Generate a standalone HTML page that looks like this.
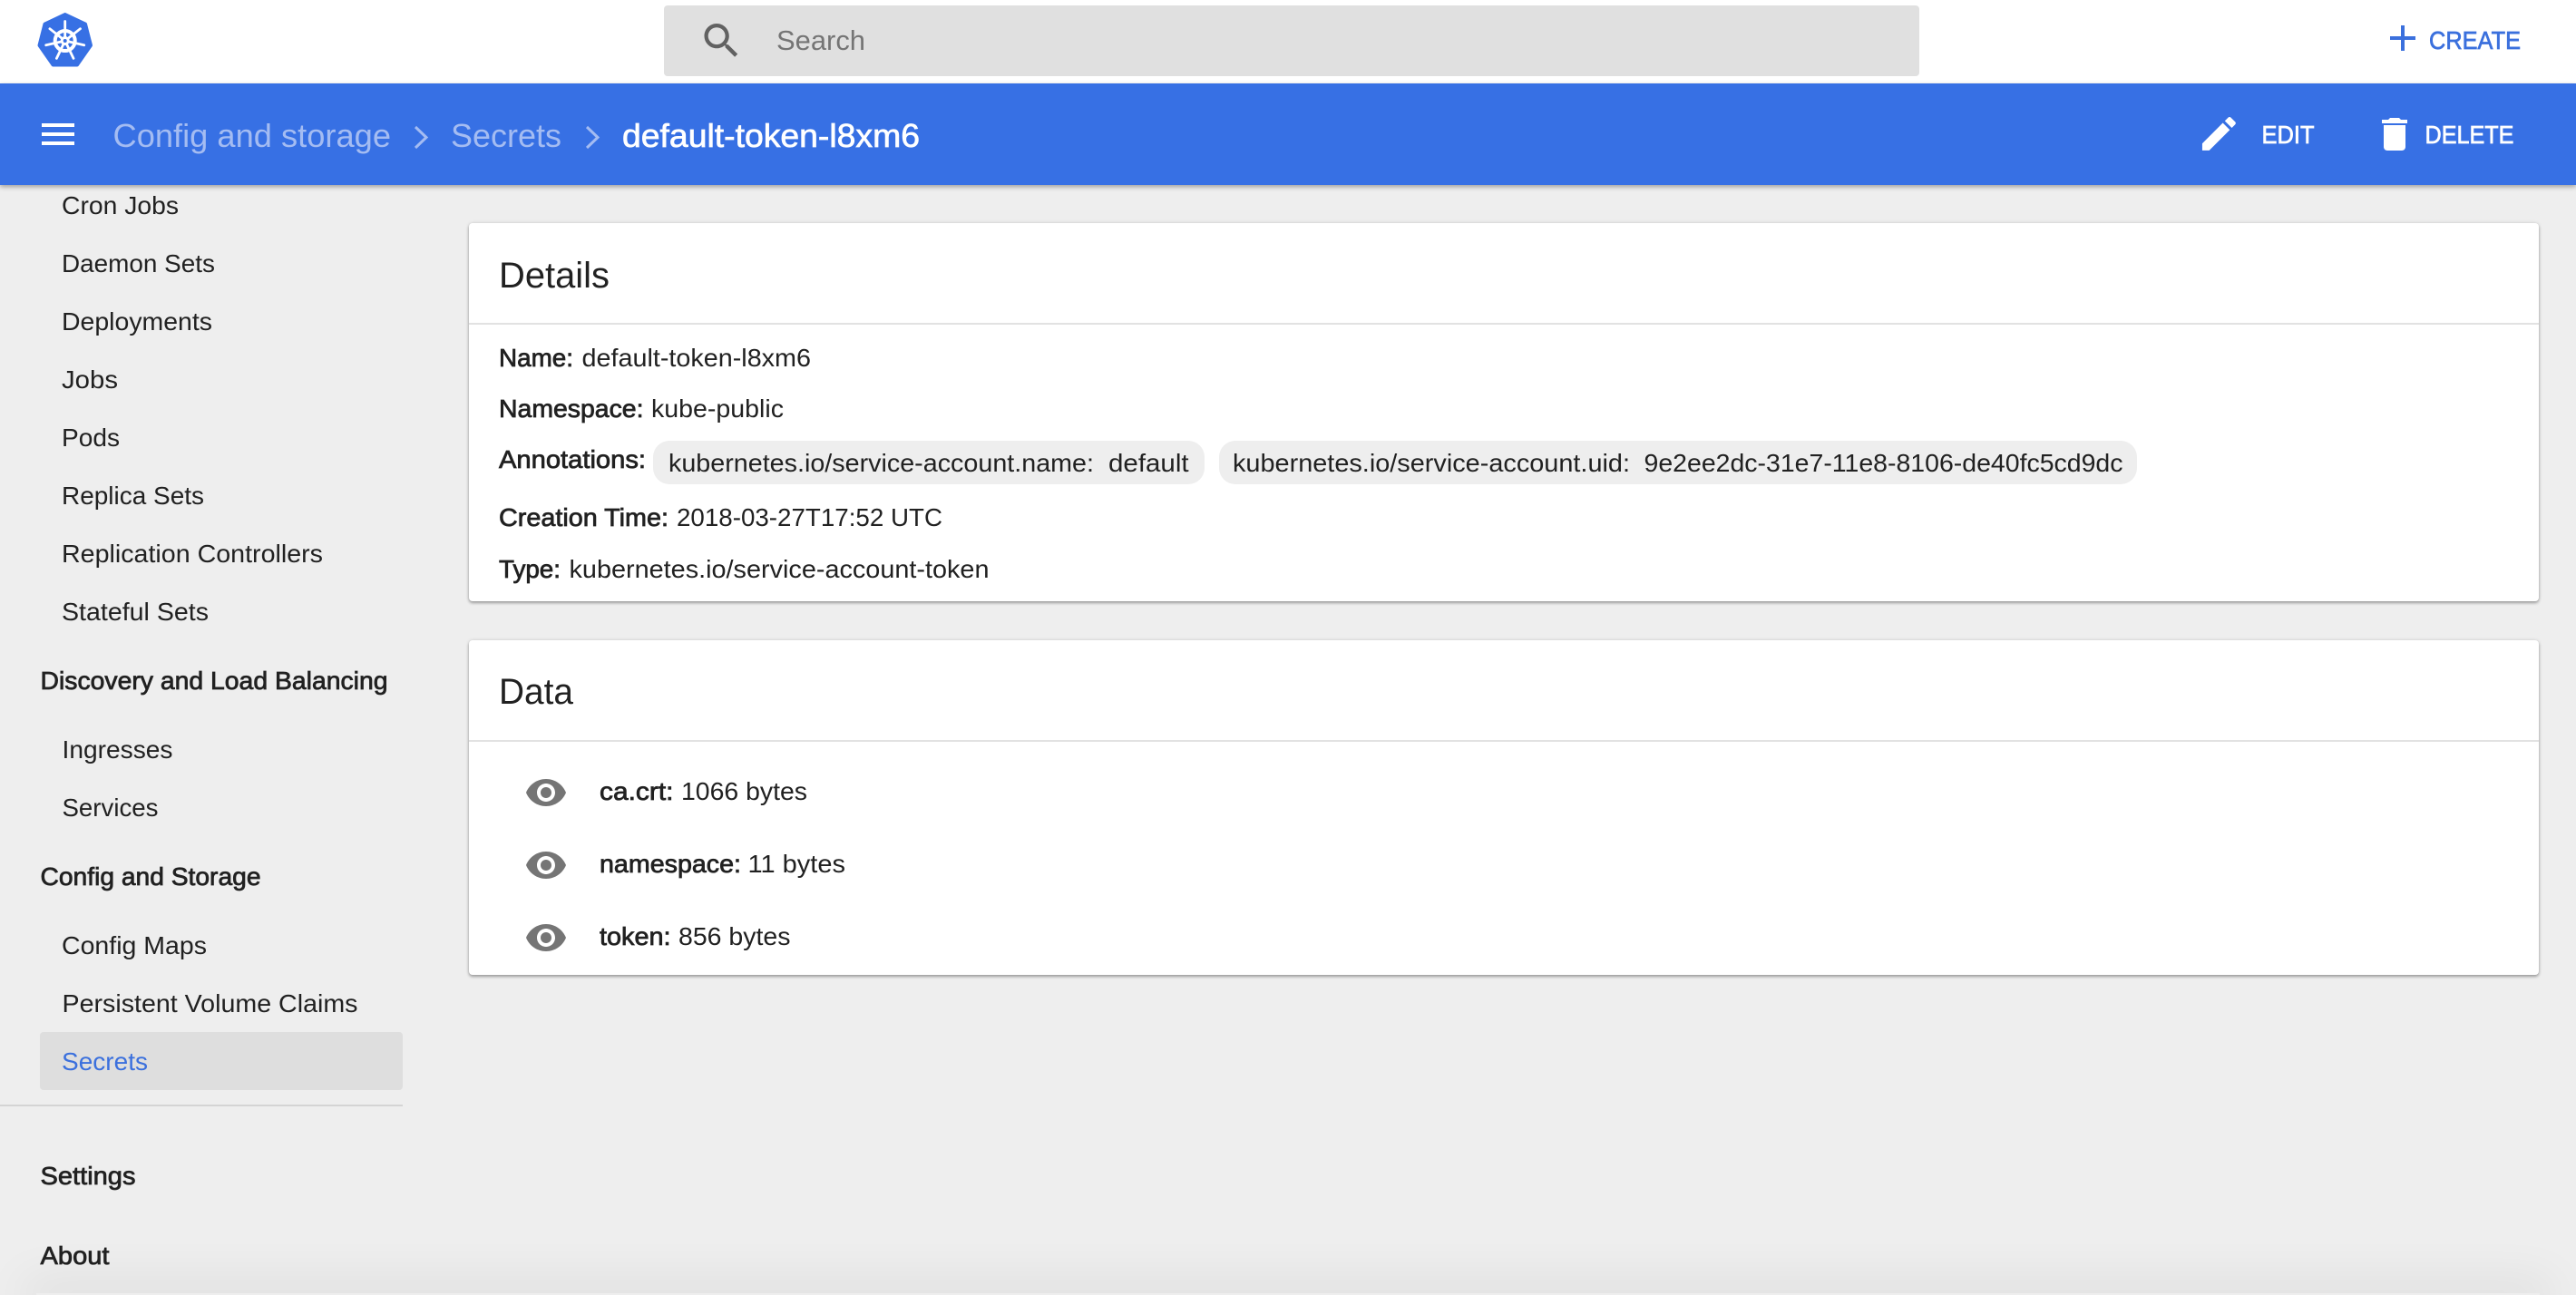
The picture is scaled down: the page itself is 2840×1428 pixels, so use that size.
<!DOCTYPE html>
<html>
<head>
<meta charset="utf-8">
<title>default-token-l8xm6</title>
<style>
html,body{margin:0;padding:0;width:2840px;height:1426px;overflow:hidden;background:#eee;}
.abs{position:absolute;}
.card{position:absolute;left:517px;width:2282px;background:#fff;border-radius:4px;box-shadow:0 2px 3px rgba(0,0,0,.32),0 0 4px rgba(0,0,0,.12);}
.line{position:absolute;left:0;right:0;height:2px;background:#e2e2e2;}
.chip{position:absolute;height:48px;top:486px;background:#eee;border-radius:18px;}
svg{position:absolute;left:0;top:0;}
text{font-family:"Liberation Sans",sans-serif;font-size:28px;fill:#212121;}
.m{stroke:#212121;stroke-width:.75px;}
.t{font-size:36px;}
.h{font-size:40px;}
.w{fill:#fff;stroke:#fff;stroke-width:.7px;}
.c{fill:#a4bcf2;}
.b{fill:#3b70dd;stroke:#3b70dd;stroke-width:.7px;}
</style>
</head>
<body>
<div class="abs" style="left:0;top:0;width:2840px;height:92px;background:#fff;"></div>
<div class="abs" style="left:732px;top:6px;width:1384px;height:78px;background:#e0e0e0;border-radius:4px;"></div>
<div class="abs" style="left:44px;top:1138px;width:400px;height:64px;background:#dedede;border-radius:4px;"></div>
<div class="abs" style="left:0;top:1218px;width:444px;height:2px;background:#d4d4d4;"></div>
<div class="abs" style="left:40px;top:1426px;width:2760px;height:2px;box-shadow:0 0 50px 14px rgba(0,0,0,.08);"></div>
<div class="abs" style="left:0;top:92px;width:2840px;height:112px;background:#3770e4;box-shadow:0 2px 5px rgba(0,0,0,.35);"></div>
<div class="card" style="top:246px;height:417px;"><div class="line" style="top:110px;"></div></div>
<div class="card" style="top:706px;height:369px;"><div class="line" style="top:110px;"></div></div>
<div class="chip" style="left:720px;width:608px;"></div>
<div class="chip" style="left:1344px;width:1012px;"></div>
<svg width="2840" height="1426" viewBox="0 0 2840 1426" xmlns="http://www.w3.org/2000/svg">
  <!-- logo -->
  <path d="M71.7 16 94 26.500 100 50 85 71.500H58.500L43.500 50 49.500 26.500Z" fill="#3770e4" stroke="#3770e4" stroke-width="4" stroke-linejoin="round"/>
  <g stroke="#fff" fill="none">
    <circle cx="71.700" cy="45" r="11" stroke-width="4"/>
    <g stroke-width="2.800" stroke-linecap="round">
      <path d="M71.700 45V23.500"/>
      <path d="M71.700 45 88.500 31.700"/>
      <path d="M71.700 45 92.700 49.800"/>
      <path d="M71.700 45 81 64.400"/>
      <path d="M71.700 45 62.400 64.400"/>
      <path d="M71.700 45 50.700 49.800"/>
      <path d="M71.700 45 54.900 31.700"/>
    </g>
  </g>
  <circle cx="71.700" cy="45" r="5" fill="#fff"/>
  <circle cx="71.700" cy="45" r="2" fill="#3770e4"/>

  <!-- search -->
  <path transform="translate(770.2 19.700) scale(2.100)" fill="#616161" d="M15.500 14h-.79l-.28-.27C15.410 12.590 16 11.110 16 9.500 16 5.910 13.090 3 9.500 3S3 5.910 3 9.500 5.910 16 9.500 16c1.610 0 3.090-.59 4.230-1.570l.27.280v.79l5 4.990L20.490 19l-4.990-5zm-6 0C7.010 14 5 11.990 5 9.500S7.010 5 9.500 5 14 7.010 14 9.500 11.990 14 9.500 14z"/>
  <text x="856" y="55" style="font-size:31px;fill:#757575" textLength="98" lengthAdjust="spacingAndGlyphs">Search</text>

  <!-- create -->
  <rect x="2647" y="28" width="4" height="28" fill="#3b70dd"/>
  <rect x="2635" y="40" width="28" height="4" fill="#3b70dd"/>
  <text x="2678" y="54" class="b" textLength="101" lengthAdjust="spacingAndGlyphs">CREATE</text>

  <!-- title bar -->
  <rect x="46" y="136" width="36" height="4" fill="#fff"/>
  <rect x="46" y="146" width="36" height="4" fill="#fff"/>
  <rect x="46" y="156" width="36" height="4" fill="#fff"/>
  <text x="124.500" y="162" class="t c" textLength="306.500" lengthAdjust="spacingAndGlyphs">Config and storage</text>
  <path d="M458 140 470 151.500 458 163" fill="none" stroke="#a4bcf2" stroke-width="3"/>
  <text x="497" y="162" class="t c" textLength="122" lengthAdjust="spacingAndGlyphs">Secrets</text>
  <path d="M647 140 659 151.500 647 163" fill="none" stroke="#a4bcf2" stroke-width="3"/>
  <text x="686" y="162" class="t w" textLength="328" lengthAdjust="spacingAndGlyphs">default-token-l8xm6</text>

  <path transform="translate(2421.8 122.850) scale(2.050)" fill="#fff" d="M3 17.250V21h3.750L17.810 9.940l-3.750-3.750L3 17.250zM20.710 7.040c.39-.39.39-1.020 0-1.410l-2.340-2.340c-.39-.39-1.020-.39-1.410 0l-1.830 1.830 3.750 3.750 1.830-1.830z"/>
  <text x="2493.500" y="158" class="w" textLength="58" lengthAdjust="spacingAndGlyphs">EDIT</text>
  <path transform="translate(2616 124) scale(2)" fill="#fff" d="M6 19c0 1.100.9 2 2 2h8c1.100 0 2-.9 2-2V7H6v12zM19 4h-3.500l-1-1h-5l-1 1H5v2h14V4z"/>
  <text x="2673.500" y="158" class="w" textLength="98" lengthAdjust="spacingAndGlyphs">DELETE</text>

  <!-- sidebar -->
  <text x="68" y="236" textLength="129" lengthAdjust="spacingAndGlyphs">Cron Jobs</text>
  <text x="68" y="300" textLength="169" lengthAdjust="spacingAndGlyphs">Daemon Sets</text>
  <text x="68" y="364" textLength="166" lengthAdjust="spacingAndGlyphs">Deployments</text>
  <text x="68" y="428" textLength="62" lengthAdjust="spacingAndGlyphs">Jobs</text>
  <text x="68" y="492" textLength="64" lengthAdjust="spacingAndGlyphs">Pods</text>
  <text x="68" y="556" textLength="157" lengthAdjust="spacingAndGlyphs">Replica Sets</text>
  <text x="68" y="620" textLength="288" lengthAdjust="spacingAndGlyphs">Replication Controllers</text>
  <text x="68" y="684" textLength="162" lengthAdjust="spacingAndGlyphs">Stateful Sets</text>
  <text x="44.500" y="760" class="m" textLength="383" lengthAdjust="spacingAndGlyphs">Discovery and Load Balancing</text>
  <text x="68.500" y="836" textLength="122" lengthAdjust="spacingAndGlyphs">Ingresses</text>
  <text x="68.500" y="900" textLength="106" lengthAdjust="spacingAndGlyphs">Services</text>
  <text x="44.500" y="976" class="m" textLength="243" lengthAdjust="spacingAndGlyphs">Config and Storage</text>
  <text x="68" y="1052" textLength="160" lengthAdjust="spacingAndGlyphs">Config Maps</text>
  <text x="68.500" y="1116" textLength="326" lengthAdjust="spacingAndGlyphs">Persistent Volume Claims</text>
  <text x="68" y="1180" style="fill:#3b70dd" textLength="95" lengthAdjust="spacingAndGlyphs">Secrets</text>
  <text x="44.500" y="1306" class="m" textLength="105" lengthAdjust="spacingAndGlyphs">Settings</text>
  <text x="44.500" y="1394" class="m" textLength="76" lengthAdjust="spacingAndGlyphs">About</text>

  <!-- details -->
  <text x="550" y="317" class="h" textLength="122" lengthAdjust="spacingAndGlyphs">Details</text>
  <text x="550" y="404" class="m" textLength="82" lengthAdjust="spacingAndGlyphs">Name:</text>
  <text x="641.500" y="404" textLength="252.500" lengthAdjust="spacingAndGlyphs">default-token-l8xm6</text>
  <text x="550" y="460" class="m" textLength="159.500" lengthAdjust="spacingAndGlyphs">Namespace:</text>
  <text x="718" y="460" textLength="146" lengthAdjust="spacingAndGlyphs">kube-public</text>
  <text x="550" y="516" class="m" textLength="162" lengthAdjust="spacingAndGlyphs">Annotations:</text>
  <text x="737" y="520" textLength="469" lengthAdjust="spacingAndGlyphs">kubernetes.io/service-account.name:</text>
  <text x="1222" y="520" textLength="88.600" lengthAdjust="spacingAndGlyphs">default</text>
  <text x="1359" y="520" textLength="438" lengthAdjust="spacingAndGlyphs">kubernetes.io/service-account.uid:</text>
  <text x="1812.500" y="520" textLength="528" lengthAdjust="spacingAndGlyphs">9e2ee2dc-31e7-11e8-8106-de40fc5cd9dc</text>
  <text x="550" y="580" class="m" textLength="187" lengthAdjust="spacingAndGlyphs">Creation Time:</text>
  <text x="746" y="580" textLength="293" lengthAdjust="spacingAndGlyphs">2018-03-27T17:52 UTC</text>
  <text x="550" y="637" class="m" textLength="68" lengthAdjust="spacingAndGlyphs">Type:</text>
  <text x="627.500" y="637" textLength="463" lengthAdjust="spacingAndGlyphs">kubernetes.io/service-account-token</text>

  <!-- data -->
  <text x="550" y="776" class="h" textLength="82" lengthAdjust="spacingAndGlyphs">Data</text>
  <g fill="#757575">
    <path transform="translate(578 850) scale(2)" d="M12 4.500C7 4.500 2.730 7.610 1 12c1.730 4.390 6 7.500 11 7.500s9.270-3.110 11-7.500c-1.730-4.390-6-7.500-11-7.500zM12 17c-2.760 0-5-2.240-5-5s2.240-5 5-5 5 2.240 5 5-2.240 5-5 5zm0-8c-1.660 0-3 1.340-3 3s1.340 3 3 3 3-1.340 3-3-1.340-3-3-3z"/>
    <path transform="translate(578 930) scale(2)" d="M12 4.500C7 4.500 2.730 7.610 1 12c1.730 4.390 6 7.500 11 7.500s9.270-3.110 11-7.500c-1.730-4.390-6-7.500-11-7.500zM12 17c-2.760 0-5-2.240-5-5s2.240-5 5-5 5 2.240 5 5-2.240 5-5 5zm0-8c-1.660 0-3 1.340-3 3s1.340 3 3 3 3-1.340 3-3-1.340-3-3-3z"/>
    <path transform="translate(578 1010) scale(2)" d="M12 4.500C7 4.500 2.730 7.610 1 12c1.730 4.390 6 7.500 11 7.500s9.270-3.110 11-7.500c-1.730-4.390-6-7.500-11-7.500zM12 17c-2.760 0-5-2.240-5-5s2.240-5 5-5 5 2.240 5 5-2.240 5-5 5zm0-8c-1.660 0-3 1.340-3 3s1.340 3 3 3 3-1.340 3-3-1.340-3-3-3z"/>
  </g>
  <text x="661" y="882" class="m" textLength="81.500" lengthAdjust="spacingAndGlyphs">ca.crt:</text>
  <text x="751" y="882" textLength="139" lengthAdjust="spacingAndGlyphs">1066 bytes</text>
  <text x="661" y="962" class="m" textLength="156" lengthAdjust="spacingAndGlyphs">namespace:</text>
  <text x="824.500" y="962" textLength="107.500" lengthAdjust="spacingAndGlyphs">11 bytes</text>
  <text x="661" y="1042" class="m" textLength="78.500" lengthAdjust="spacingAndGlyphs">token:</text>
  <text x="748" y="1042" textLength="123.500" lengthAdjust="spacingAndGlyphs">856 bytes</text>
</svg>
</body>
</html>
